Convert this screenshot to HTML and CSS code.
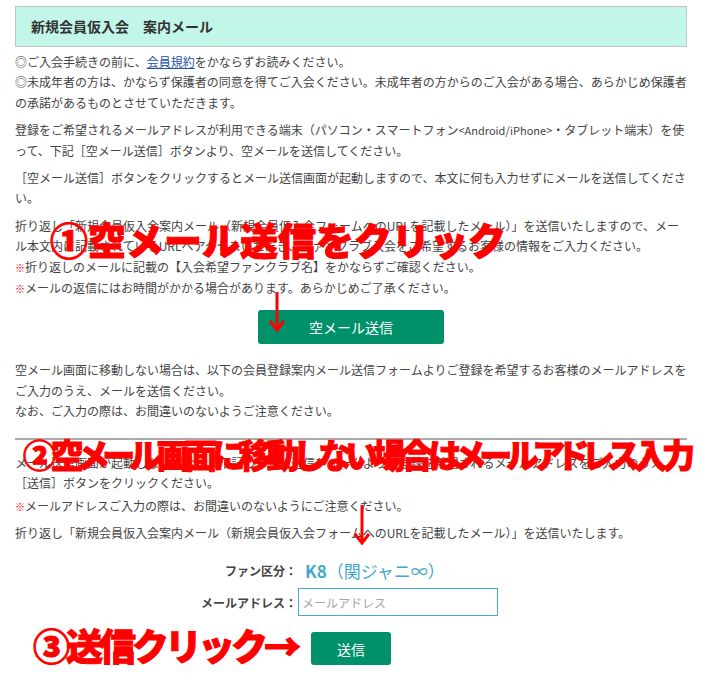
FILE: index.html
```html
<!DOCTYPE html>
<html lang="ja">
<head>
    <meta charset="UTF-8">
    <meta name="viewport" content="width=device-width, initial-scale=1.0">
    <title>新規会員仮入会 案内メール</title>
    <link rel="stylesheet" href="styles.css">
</head>
<body>
    <div class="page">
        <div class="content">
            <h2 class="title">新規会員仮入会　案内メール</h2>

            <p>◎ご入会手続きの前に、<a href="#">会員規約</a>をかならずお読みください。<br>
            ◎未成年者の方は、かならず保護者の同意を得てご入会ください。未成年者の方からのご入会がある場合、あらかじめ保護者の承諾があるものとさせていただきます。</p>

            <p>登録をご希望されるメールアドレスが利用できる端末（パソコン・スマートフォン<span class="latin">&lt;Android/iPhone&gt;</span>・タブレット端末）を使って、下記［空メール送信］ボタンより、空メールを送信してください。</p>

            <p>［空メール送信］ボタンをクリックするとメール送信画面が起動しますので、本文に何も入力せずにメールを送信してください。</p>

            <p>折り返し「新規会員仮入会案内メール（新規会員仮入会フォームへのURLを記載したメール）」を送信いたしますので、メール本文内に記載されているURLへアクセスいただき、ファンクラブ入会をご希望するお客様の情報をご入力ください。<br>
            <span class="mark">※</span>折り返しのメールに記載の【入会希望ファンクラブ名】をかならずご確認ください。<br>
            <span class="mark">※</span>メールの返信にはお時間がかかる場合があります。あらかじめご了承ください。</p>

            <div class="btn-row">
                <button class="btn btn-wide">空メール送信</button>
            </div>

            <p class="after-btn">空メール画面に移動しない場合は、以下の会員登録案内メール送信フォームよりご登録を希望するお客様のメールアドレスをご入力のうえ、メールを送信ください。<br>
            なお、ご入力の際は、お間違いのないようご注意ください。</p>

            <hr class="divider">

            <p class="tight">メール送信画面が起動しない場合は、下記のメール送信フォームよりご登録を希望されるメールアドレスをご入力のうえ、<br>
            ［送信］ボタンをクリックください。</p>
            <p class="notice"><span class="mark">※</span>メールアドレスご入力の際は、お間違いのないようにご注意ください。</p>

            <p>折り返し「新規会員仮入会案内メール（新規会員仮入会フォームへのURLを記載したメール）」を送信いたします。</p>

            <div class="form">
                <div class="label">ファン区分：</div>
                <div class="fan"><b>K8</b>（関ジャニ∞）</div>
                <div class="label">メールアドレス：</div>
                <div><input type="text" class="mail" placeholder="メールアドレス"></div>
            </div>

            <div class="btn-row">
                <button class="btn btn-small">送信</button>
            </div>
        </div>

        <!-- annotations drawn over the page -->
        <div class="note note1">①空メール送信をクリック</div>
        <div class="note note2">②空メール画面に移動しない場合はメールアドレス入力</div>
        <div class="note note3">③送信クリック→</div>

        <svg class="arrow arrow1" width="20" height="44" viewBox="0 0 20 44">
            <line x1="10" y1="2" x2="10" y2="40" />
            <polyline points="3,31 10,40 17,31" />
        </svg>
        <svg class="arrow arrow2" width="20" height="44" viewBox="0 0 20 44">
            <line x1="10" y1="2" x2="10" y2="40" />
            <polyline points="3,31 10,40 17,31" />
        </svg>
    </div>
</body>
</html>
```

FILE: styles.css
```css
body {
    margin: 0;
    background-color: white;
    font-family: "Noto Sans CJK JP", sans-serif;
    color: #444;
}

.page {
    position: relative;
    width: 714px;
    height: 681px;
    overflow: hidden;
}

.content {
    width: 672px;
    padding: 6px 0 0 15px;
}

.title {
    margin: 0 0 5px 0;
    height: 39px;
    line-height: 39px;
    padding-left: 15px;
    background-color: #c1f6e9;
    border: 1px solid #c4c4c4;
    font-size: 14px;
    font-weight: bold;
    color: #333;
}

p {
    margin: 0 0 7px 0;
    font-size: 12px;
    line-height: 20.4px;
}

a {
    color: #1d4fa6;
}

.latin {
    font-size: 11px;
}

.mark {
    color: #e60012;
    font-size: 10px;
}

.btn-row {
    display: flex;
    justify-content: center;
}

.btn {
    background-color: #00916a;
    color: white;
    border: none;
    border-radius: 3px;
    font-family: "Noto Sans CJK JP", sans-serif;
    font-size: 14px;
    cursor: pointer;
}

.btn-wide {
    width: 186px;
    height: 34px;
    margin-top: 4px;
}

.after-btn {
    margin-top: 16px;
}

.divider {
    border: none;
    border-top: 2px solid #aaa;
    margin: 16px 0 13px 0;
}

.tight {
    margin-bottom: 2px;
}

.notice {
    margin-bottom: 6px;
}

.form {
    display: grid;
    grid-template-columns: 282px 1fr;
    row-gap: 5px;
    align-items: center;
    margin-top: 15px;
}

.label {
    text-align: right;
    font-size: 12px;
    font-weight: bold;
    color: #444;
}

.fan {
    padding-left: 8px;
    font-size: 17px;
    color: #42a9c9;
}

.mail {
    width: 200px;
    height: 28px;
    box-sizing: border-box;
    margin-left: 1px;
    border: 1px solid #43b0d1;
    padding: 0 3px;
    font-family: "Noto Sans CJK JP", sans-serif;
    font-size: 12px;
    outline: none;
}

.mail::placeholder {
    color: #a5a5a5;
}

.btn-small {
    width: 80px;
    height: 33px;
    margin-top: 16px;
}

.note {
    position: absolute;
    color: #ff0000;
    font-weight: 900;
    line-height: 1;
    white-space: nowrap;
    -webkit-text-stroke: 1px #ff0000;
}

.note1 {
    left: 50px;
    top: 220px;
    font-size: 38px;
}

.note2 {
    left: 23px;
    top: 438px;
    font-size: 33px;
    font-feature-settings: "palt";
    letter-spacing: -5.2px;
}

.note3 {
    left: 33px;
    top: 627px;
    font-size: 37px;
    letter-spacing: -4px;
}

.arrow {
    position: absolute;
    fill: none;
    stroke: #ff0000;
    stroke-width: 3;
}

.arrow1 {
    left: 267px;
    top: 290px;
}

.arrow2 {
    left: 352px;
    top: 503px;
}
```
